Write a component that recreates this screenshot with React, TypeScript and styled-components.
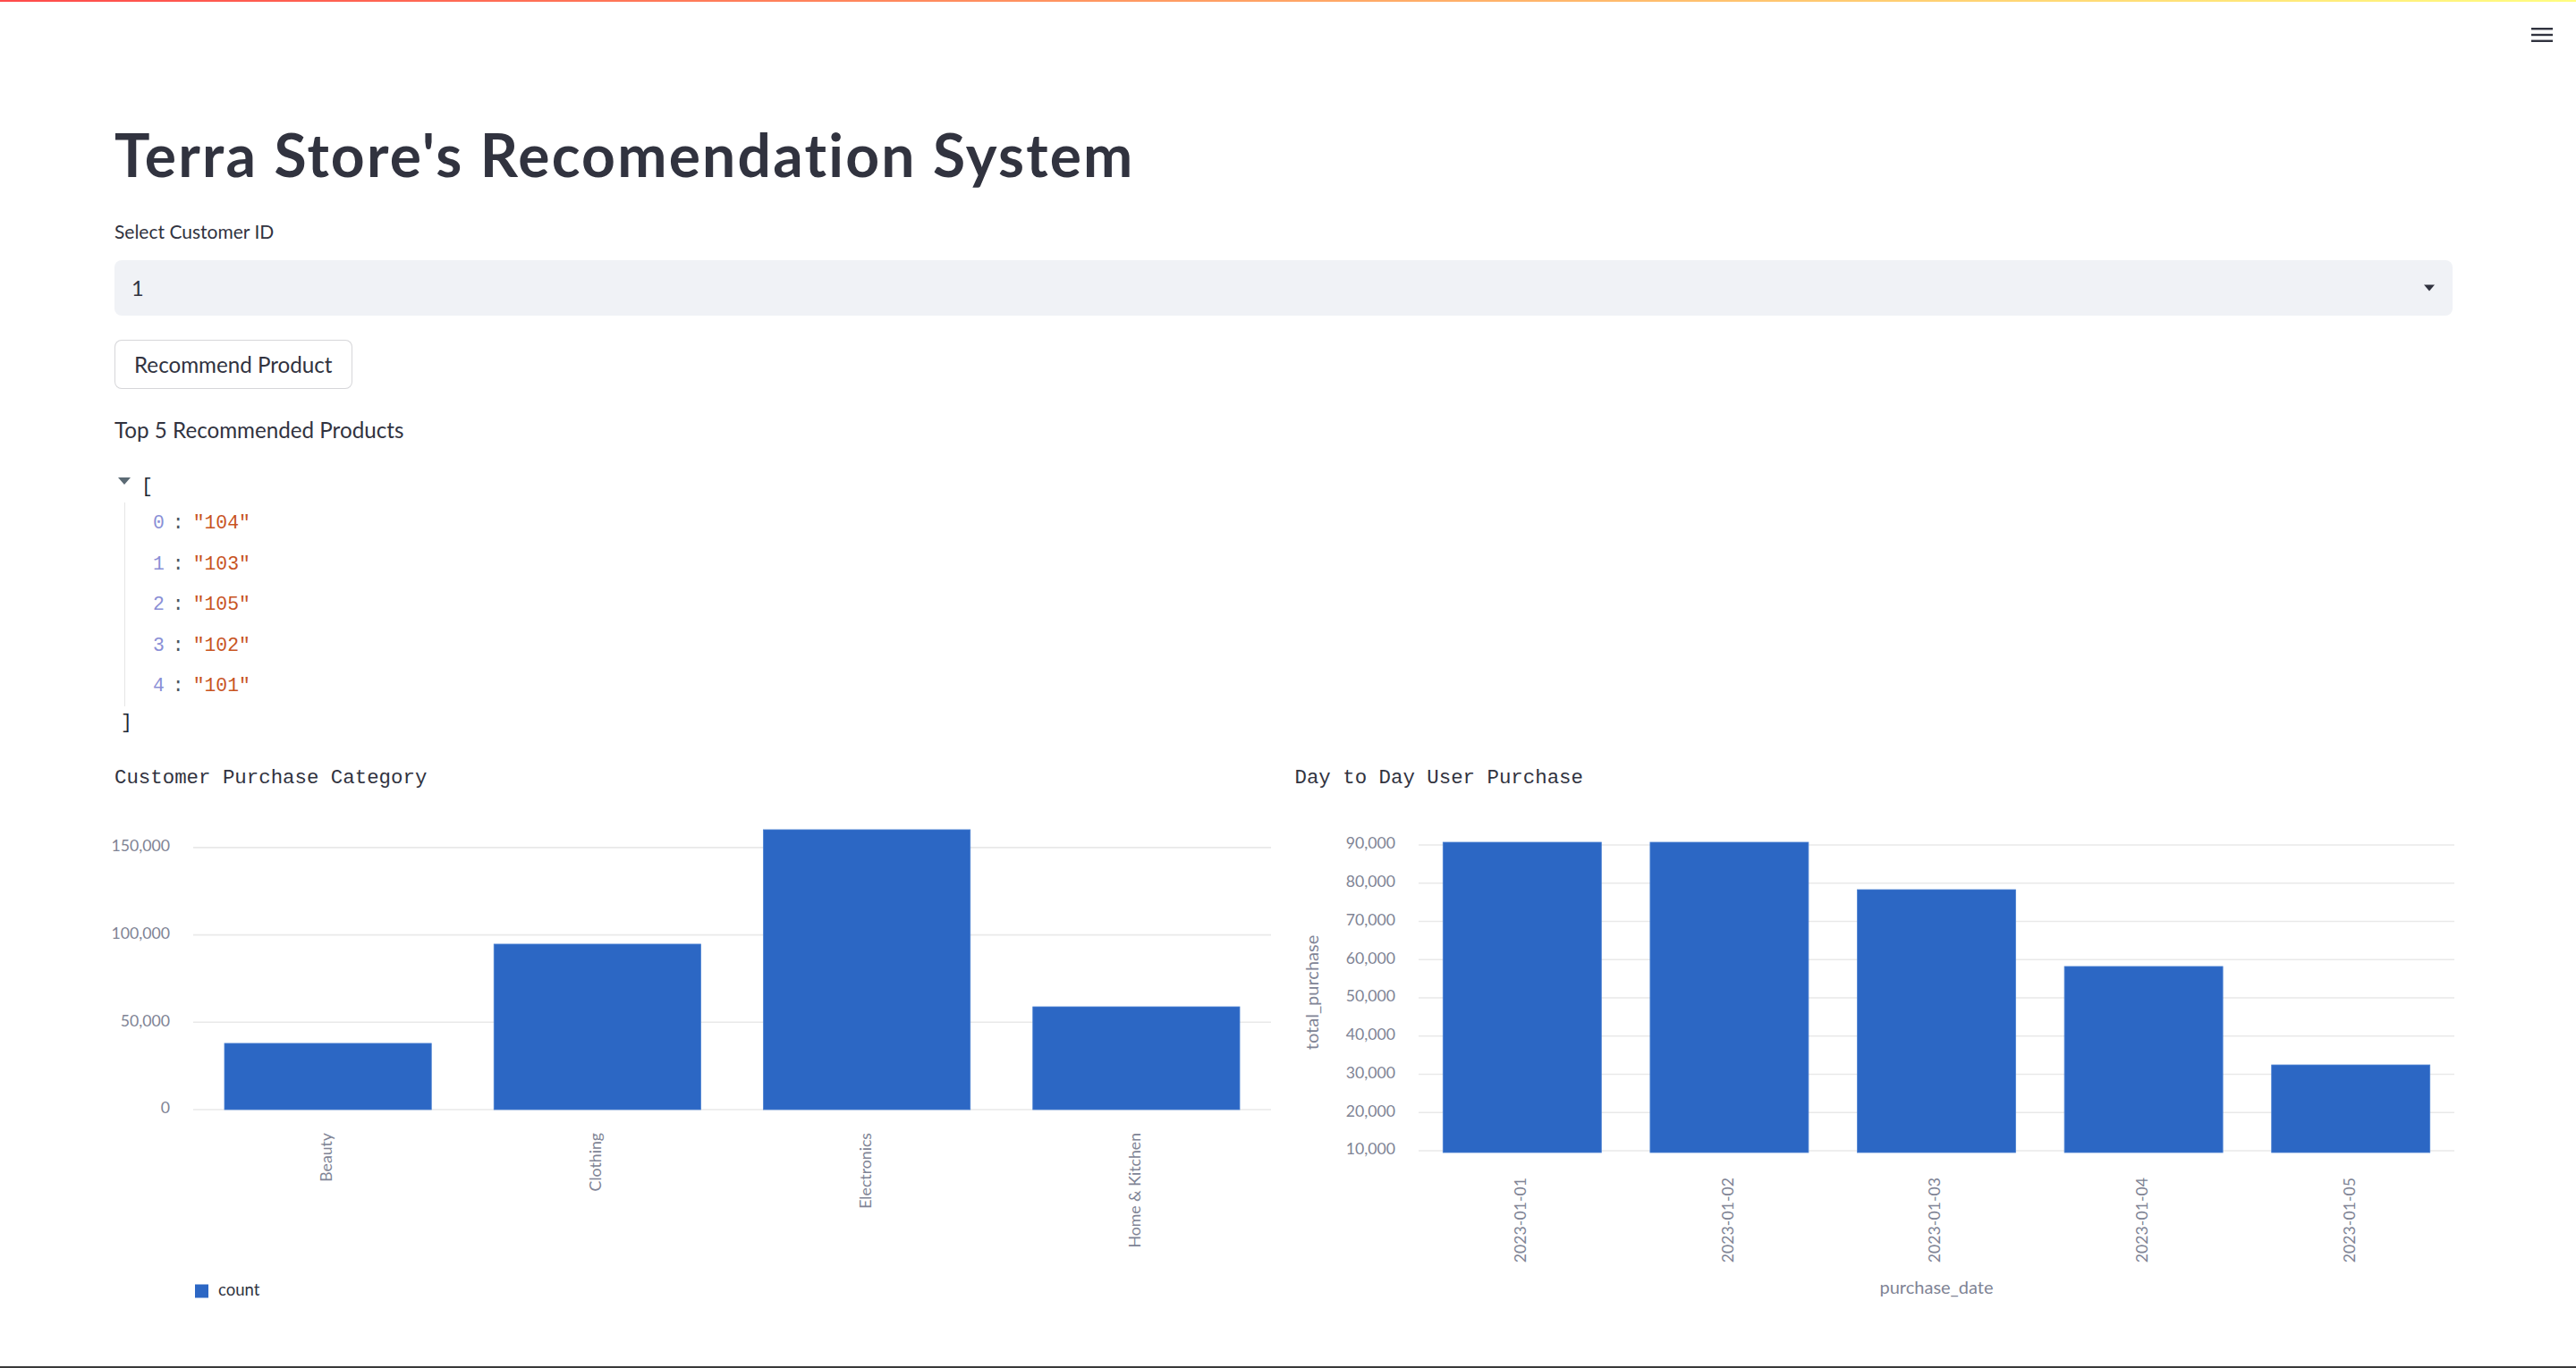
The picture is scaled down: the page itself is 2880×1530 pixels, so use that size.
import React from 'react';
import styled, { createGlobalStyle } from 'styled-components';

const GlobalStyle = createGlobalStyle`
  html, body {
    margin: 0;
    padding: 0;
    background: #ffffff;
    overflow: hidden;
  }
  body {
    font-family: Lato, "Noto Sans", sans-serif;
    color: #31333f;
  }
  * {
    box-sizing: border-box;
  }
`;

const Page = styled.div`
  display: flex;
  flex-direction: column;
  height: 1530px;
  border-bottom: 2px solid #3a3a3a;
`;

const Decoration = styled.div`
  height: 2px;
  background: linear-gradient(90deg, rgb(255, 75, 75), rgb(255, 253, 128));
`;

const Header = styled.header`
  height: 96px;
  display: flex;
  justify-content: flex-end;
  align-items: flex-start;
  padding: 29px 26px 0 0;
`;

const MenuButton = styled.button`
  background: none;
  border: none;
  padding: 0;
  width: 24px;
  height: 16px;
  display: flex;
  cursor: pointer;
`;

const Main = styled.main`
  display: flex;
  flex-direction: column;
  padding: 36px 138px 0 128px;
`;

const Title = styled.h1`
  margin: 0;
  font-size: 66px;
  font-weight: 700;
  line-height: 78px;
  letter-spacing: 2.2px;
  color: #31333f;
`;

const FieldLabel = styled.label`
  margin-top: 30px;
  font-size: 21px;
  line-height: 1.6;
  color: #31333f;
`;

const SelectBox = styled.div`
  margin-top: 15px;
  height: 62px;
  background: #f0f2f6;
  border-radius: 8px;
  display: flex;
  align-items: center;
  justify-content: space-between;
  padding: 0 20px 0 19px;
  font-size: 23.6px;
  color: #31333f;
`;

const ActionButton = styled.button`
  margin-top: 27px;
  align-self: flex-start;
  height: 55px;
  padding: 0 21px;
  background: #ffffff;
  border: 1px solid rgba(49, 51, 63, 0.2);
  border-radius: 8px;
  font-family: Lato, "Noto Sans", sans-serif;
  font-size: 24.2px;
  color: #31333f;
  cursor: pointer;
`;

const SectionText = styled.p`
  margin: 27px 0 0;
  font-size: 24.2px;
  line-height: 37.8px;
  color: #31333f;
`;

const JsonView = styled.div`
  margin-top: 26px;
  font-family: "Liberation Mono", "DejaVu Sans Mono", monospace;
  font-size: 21.4px;
  color: #1c2733;
`;

const JsonLine = styled.div<{ $indent?: number }>`
  height: 37px;
  display: flex;
  align-items: center;
  padding-left: ${(p) => p.$indent ?? 0}px;
`;

const Caret = styled.svg`
  margin: 0 12px 0 4px;
  transform: translateY(-6px);
`;

const JsonRows = styled.div`
  margin-left: 11px;
  border-left: 1px solid #e6e6e6;
  padding-left: 31px;
`;

const JsonRow = styled.div`
  height: 45.5px;
  display: flex;
  align-items: center;
`;

const JsonKey = styled.span`
  color: #8a8fd6;
`;

const JsonColon = styled.span`
  color: #4a5560;
  margin: 0 10px 0 9px;
`;

const JsonString = styled.span`
  color: #c8541f;
`;

const ChartGrid = styled.div`
  margin-top: 25.5px;
  display: grid;
  grid-template-columns: 1fr 1fr;
  column-gap: 25px;
`;

const ChartColumn = styled.section`
  display: flex;
  flex-direction: column;
  min-width: 0;
`;

const ChartTitle = styled.div`
  font-family: "Liberation Mono", "DejaVu Sans Mono", monospace;
  font-size: 22.4px;
  line-height: 36px;
  color: #31333f;
`;

const ChartSvg = styled.svg`
  display: block;
  overflow: visible;
`;

const AxisLabel = styled.text`
  font-family: Lato, "Noto Sans", sans-serif;
  font-size: 17.7px;
  fill: #808495;
`;

const AxisTitle = styled.text`
  font-family: Lato, "Noto Sans", sans-serif;
  font-size: 20px;
  fill: #808495;
`;

const LegendText = styled.text`
  font-family: Lato, "Noto Sans", sans-serif;
  font-size: 18.5px;
  fill: #31333f;
`;

const BAR = '#2c67c4';
const GRID = '#e9e9e9';

type Bar = { label: string; value: number };

interface BarChartProps {
  bars: Bar[];
  ticks: number[];
  plotLeft: number;
  plotRight: number;
  baseValue: number;
  baseY: number;
  pxPerUnit: number;
  barBottom: number;
  barInset: number;
  labelRight: number;
  xLabelTop: number;
  xTitle?: { text: string; y: number };
  yTitle?: { text: string; x: number; y: number };
  legend?: { text: string; x: number; y: number };
}

const fmt = (n: number) => n.toLocaleString('en-US');

function BarChart({
  bars,
  ticks,
  plotLeft,
  plotRight,
  baseValue,
  baseY,
  pxPerUnit,
  barBottom,
  barInset,
  labelRight,
  xLabelTop,
  xTitle,
  yTitle,
  legend,
}: BarChartProps) {
  const band = (plotRight - plotLeft) / bars.length;
  const y = (v: number) => baseY - (v - baseValue) * pxPerUnit;

  return (
    <ChartSvg width={1294} height={600}>
      {ticks.map((t) => (
        <g key={t}>
          <line
            x1={plotLeft}
            x2={plotRight}
            y1={y(t)}
            y2={y(t)}
            stroke={GRID}
            strokeWidth={1.6}
          />
          <AxisLabel x={labelRight} y={y(t)} textAnchor="end" dominantBaseline="middle">
            {fmt(t)}
          </AxisLabel>
        </g>
      ))}
      {bars.map((b, i) => {
        const x0 = plotLeft + band * i;
        const top = y(b.value);
        return (
          <g key={b.label}>
            <rect
              x={x0 + barInset}
              y={top}
              width={band - barInset * 2}
              height={barBottom - top}
              fill={BAR}
              stroke="#4a80d2"
              strokeWidth={0.8}
            />
            <AxisLabel
              transform={`translate(${x0 + band / 2}, ${xLabelTop}) rotate(-90)`}
              textAnchor="end"
              dominantBaseline="middle"
            >
              {b.label}
            </AxisLabel>
          </g>
        );
      })}
      {xTitle && (
        <AxisTitle
          x={(plotLeft + plotRight) / 2}
          y={xTitle.y}
          textAnchor="middle"
          dominantBaseline="middle"
        >
          {xTitle.text}
        </AxisTitle>
      )}
      {yTitle && (
        <AxisTitle
          transform={`translate(${yTitle.x}, ${yTitle.y}) rotate(-90)`}
          textAnchor="middle"
          dominantBaseline="middle"
        >
          {yTitle.text}
        </AxisTitle>
      )}
      {legend && (
        <g>
          <rect x={legend.x} y={legend.y - 7.5} width={15} height={15} fill={BAR} />
          <LegendText x={legend.x + 26} y={legend.y} dominantBaseline="middle">
            {legend.text}
          </LegendText>
        </g>
      )}
    </ChartSvg>
  );
}

const recommended = ['104', '103', '105', '102', '101'];

const categories: Bar[] = [
  { label: 'Beauty', value: 37900 },
  { label: 'Clothing', value: 94700 },
  { label: 'Electronics', value: 160200 },
  { label: 'Home & Kitchen', value: 58850 },
];

const daily: Bar[] = [
  { label: '2023-01-01', value: 90700 },
  { label: '2023-01-02', value: 90700 },
  { label: '2023-01-03', value: 78300 },
  { label: '2023-01-04', value: 58200 },
  { label: '2023-01-05', value: 32450 },
];

export default function App() {
  return (
    <>
      <GlobalStyle />
      <Page>
        <Decoration />
        <Header>
          <MenuButton aria-label="Main menu">
            <svg width="24" height="16" viewBox="0 0 24 16">
              <rect x="0" y="0" width="24" height="2.4" fill="#31333f" />
              <rect x="0" y="6.8" width="24" height="2.4" fill="#31333f" />
              <rect x="0" y="13.6" width="24" height="2.4" fill="#31333f" />
            </svg>
          </MenuButton>
        </Header>

        <Main>
          <Title>Terra Store's Recomendation System</Title>

          <FieldLabel>Select Customer ID</FieldLabel>
          <SelectBox>
            <span>1</span>
            <svg width="12" height="8" viewBox="0 0 12 8">
              <path d="M0 0.5 H12 L6 7.5 Z" fill="#31333f" />
            </svg>
          </SelectBox>

          <ActionButton>Recommend Product</ActionButton>

          <SectionText>Top 5 Recommended Products</SectionText>

          <JsonView>
            <JsonLine>
              <Caret width="14" height="8" viewBox="0 0 14 8">
                <path d="M0 0 H14 L7 8 Z" fill="#5b6a74" />
              </Caret>
              <span>[</span>
            </JsonLine>
            <JsonRows>
              {recommended.map((v, i) => (
                <JsonRow key={v}>
                  <JsonKey>{i}</JsonKey>
                  <JsonColon>:</JsonColon>
                  <JsonString>"{v}"</JsonString>
                </JsonRow>
              ))}
            </JsonRows>
            <JsonLine $indent={7}>]</JsonLine>
          </JsonView>

          <ChartGrid>
            <ChartColumn>
              <ChartTitle>Customer Purchase Category</ChartTitle>
              <BarChart
                bars={categories}
                ticks={[0, 50000, 100000, 150000]}
                plotLeft={88}
                plotRight={1293}
                baseValue={0}
                baseY={353}
                pxPerUnit={97.7 / 50000}
                barBottom={353}
                barInset={35}
                labelRight={62}
                xLabelTop={379}
                legend={{ text: 'count', x: 90, y: 556 }}
              />
            </ChartColumn>
            <ChartColumn>
              <ChartTitle>Day to Day User Purchase</ChartTitle>
              <BarChart
                bars={daily}
                ticks={[10000, 20000, 30000, 40000, 50000, 60000, 70000, 80000, 90000]}
                plotLeft={138}
                plotRight={1296}
                baseValue={10000}
                baseY={399}
                pxPerUnit={42.75 / 10000}
                barBottom={401}
                barInset={27.3}
                labelRight={112}
                xLabelTop={429}
                xTitle={{ text: 'purchase_date', y: 554 }}
                yTitle={{ text: 'total_purchase', x: 21, y: 222 }}
              />
            </ChartColumn>
          </ChartGrid>
        </Main>
      </Page>
    </>
  );
}
